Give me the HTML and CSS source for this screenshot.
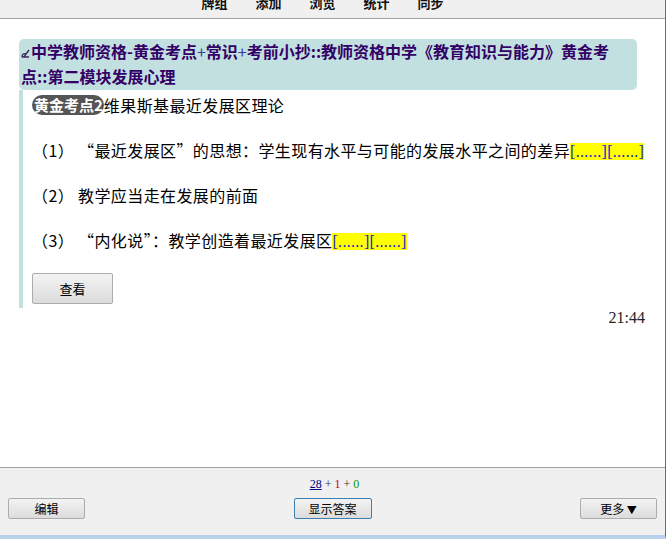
FILE: index.html
```html
<!DOCTYPE html>
<html lang="zh-CN">
	<head>
		<meta charset="UTF-8" />
		<title>Anki</title>
		<link rel="stylesheet" href="styles.css">
	</head>
	<body>
		<div class="window">
			<div class="toolbar">
				<span>牌组</span>
				<span>添加</span>
				<span>浏览</span>
				<span>统计</span>
				<span>同步</span>
			</div>
			<div class="main">
				<div class="card">
					<div class="card-head">
						<svg class="edit-icon" width="9" height="9" viewBox="0 0 9 9">
							<path d="M1 8 L8 8 M1 8 C1 5 3 4 5 5 L3 8 M5 5 L8 1" stroke="#3a2a5a" stroke-width="1.4" fill="none"/>
						</svg>中学教师资格-黄金考点<span class="plus">+</span>常识<span class="plus">+</span>考前小抄::教师资格中学《教育知识与能力》黄金考点::第二模块发展心理
					</div>
					<div class="card-body">
						<p><span class="badge">黄金考点2</span>维果斯基最近发展区理论</p>
						<p>（1） “最近发展区”的思想：学生现有水平与可能的发展水平之间的差异<span class="blank">[......]</span><span class="blank">[......]</span></p>
						<p>（2） 教学应当走在发展的前面</p>
						<p>（3） “内化说”：教学创造着最近发展区<span class="blank">[......]</span><span class="blank">[......]</span></p>
						<button class="btn view">查看</button>
					</div>
				</div>
				<div class="time">21:44</div>
			</div>
			<div class="footer">
				<div class="counts"><a href="#">28</a> + <span class="red">1</span> + <span class="green">0</span></div>
				<div class="actions">
					<button class="btn">编辑</button>
					<button class="btn focus">显示答案</button>
					<button class="btn">更多 <span class="arrow">▼</span></button>
				</div>
			</div>
		</div>
	</body>
</html>
```

FILE: styles.css
```css
body {
	margin: 0;
	background-color: #fff;
	font-family: "Noto Sans CJK SC", "Liberation Sans", sans-serif;
}
.window {
	display: flex;
	flex-direction: column;
	width: 665px;
	height: 535px;
	border-right: 1px solid #5c6f88;
	border-bottom: 4px solid #b9d1ea;
}
.toolbar {
	height: 18px;
	flex-shrink: 0;
	background-color: #f0f0f0;
	border-bottom: 1px solid #a0a0a0;
	display: flex;
	justify-content: center;
	gap: 28px;
	overflow: hidden;
	padding-right: 20px;
}
.toolbar span {
	font-size: 13px;
	font-weight: bold;
	line-height: 13px;
	margin-top: -4px;
	color: #111;
}
.main {
	flex: 1;
	padding: 20px 20px 0 19px;
}
.card {
	width: 618px;
}
.card-head {
	background-color: #c2e0e0;
	border-radius: 5px;
	padding: 0 22px 1px 2px;
	font-size: 16px;
	font-weight: bold;
	line-height: 25px;
	color: #330066;
}
.plus {
	color: #3a3aa0;
	font-weight: normal;
}
.edit-icon {
	margin-right: 1px;
}
.card-body {
	border-left: 4px solid #c2e0e0;
	padding: 3px 0 4px 9px;
	white-space: nowrap;
}
.card-body p {
	margin: 0 0 21px;
	font-size: 16px;
	line-height: 24px;
	height: 24px;
	letter-spacing: 0.4px;
	color: #000;
}
.badge {
	display: inline-block;
	background-color: #555;
	color: #fff;
	font-weight: bold;
	font-size: 15px;
	letter-spacing: 0;
	border-radius: 10px;
	padding: 0 1px 0 2px;
	line-height: 20px;
	vertical-align: 1px;
}
.blank {
	background-color: #ffff00;
	color: #2222cc;
	font-family: "Liberation Serif", serif;
	font-size: 16px;
	letter-spacing: 0.3px;
}
.btn {
	font-family: "Noto Sans CJK SC", sans-serif;
	font-size: 12px;
	color: #000;
	background: linear-gradient(#f3f3f3, #dcdcdc);
	border: 1px solid #acacac;
	border-radius: 2px;
	height: 21px;
	width: 77px;
	padding: 0;
	cursor: pointer;
}
.btn.view {
	width: 81px;
	height: 31px;
	font-size: 13px;
}
.btn.focus {
	border-color: #3c7fb1;
	width: 78px;
}
.arrow {
	font-size: 10px;
}
.time {
	width: 626px;
	text-align: right;
	font-family: "Liberation Serif", serif;
	font-size: 16px;
	line-height: 20px;
	color: #222;
}
.footer {
	height: 59px;
	flex-shrink: 0;
	background-color: #f0f0f0;
	border-top: 1px solid #a0a0a0;
	padding: 8px 8px 0;
}
.counts {
	text-align: center;
	font-family: "Liberation Serif", serif;
	font-size: 12px;
	line-height: 16px;
	color: #333;
	padding-left: 4px;
}
.counts a {
	color: #000080;
}
.red {
	color: #c00;
}
.green {
	color: #090;
}
.actions {
	display: flex;
	justify-content: space-between;
	margin-top: 6px;
}
```
